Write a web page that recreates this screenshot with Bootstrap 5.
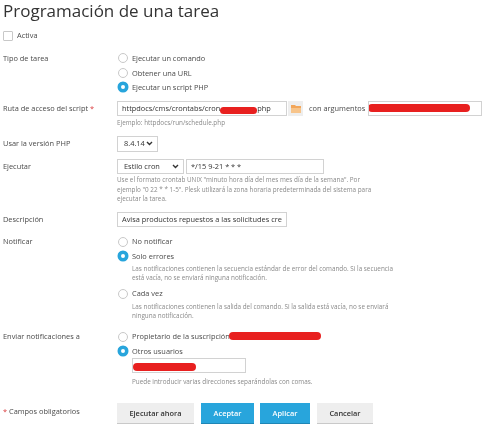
<!DOCTYPE html>
<html lang="es">
<head>
<meta charset="utf-8">
<title>Programación de una tarea</title>
<link href="https://cdn.jsdelivr.net/npm/bootstrap@5.3.0/dist/css/bootstrap.min.css" rel="stylesheet">
<style>
html,body{height:440px;overflow:hidden}
body{font-family:"Open Sans","Noto Sans",sans-serif;font-size:7.4px;line-height:15px;color:#4a4a4a;background:#fff;padding:0 0 0 3px;filter:blur(.25px)}
.ttl{font-size:17px;line-height:22px;font-weight:400;color:#333;margin:0}
.frow{display:flex}
.lbl{width:114px;flex:none;line-height:14.5px}
.ctl{flex:1;min-width:0}
.opt{display:flex;align-items:center;gap:4px;height:14.5px;line-height:14.5px;position:relative}
.rad{width:10px;height:10px;border-radius:50%;border:1px solid #c8c8c8;background:#fff;flex:none;margin-left:1px}
.rad.on{border:3px solid #28a5dc;box-shadow:0 0 0 .5px #28a5dc}
.chk{width:10px;height:10px;border:1px solid #c8c8c8;border-radius:1px;flex:none}
.fld{height:15px;border:1px solid #d2d2d2;background:#fff;padding:0 4px;display:flex;align-items:center;color:#333;white-space:nowrap;overflow:hidden;position:relative;flex:none}
.gapfill{width:35px;flex:none}
.hnt{font-size:6.35px;line-height:9.5px;color:#8a8a8a;white-space:nowrap}
.hnt.in{margin-left:15px}
.sel{justify-content:space-between;padding:0 4px 0 6px}
.chev{width:7px;height:5px;flex:none}
.scr{position:absolute;background:#e8201f;border-radius:4px}
.fold{width:15px;height:15px;background:#eee;display:flex;align-items:center;justify-content:center;flex:none;margin:0 6px 0 1px}
.act{border:0;border-bottom:1px solid #c9c9c9;height:21px;font-size:7.4px;line-height:20px;font-weight:600;font-family:inherit;padding:0;border-radius:0;background:#eeeeee;color:#333}
.act.pri{background:#28a5dc;color:#fff;border-bottom-color:#1f86b5}
.req{color:#d9383a}
</style>
</head>
<body>
<h1 class="ttl">Programación de una tarea</h1>
<div class="d-flex align-items-center" style="gap:4px;margin-top:8px;height:11px"><span class="chk"></span><span>Activa</span></div>

<div class="frow" style="margin-top:10px">
  <div class="lbl">Tipo de tarea</div>
  <div class="ctl">
    <div class="opt"><span class="rad"></span>Ejecutar un comando</div>
    <div class="opt"><span class="rad"></span>Obtener una URL</div>
    <div class="opt"><span class="rad on"></span>Ejecutar un script PHP</div>
  </div>
</div>

<div class="frow" style="margin-top:6.5px">
  <div class="lbl">Ruta de acceso del script <span class="req">*</span></div>
  <div class="ctl">
    <div class="d-flex align-items-center">
      <div class="fld" style="width:170px">httpdocs/cms/crontabs/cron<span class="gapfill"></span>.php<span class="scr" style="left:102px;top:5px;width:37px;height:7px"></span></div>
      <div class="fold"><svg width="10" height="9" viewBox="0 0 10 9"><path d="M0 1h4l1 1h5v7H0z" fill="#f2a65a"/><path d="M0 4h10v5H0z" fill="#f7c48a"/></svg></div>
      <span style="white-space:nowrap;margin-right:3px">con argumentos</span>
      <div class="fld" style="width:114px"><span class="scr" style="left:-1px;top:2px;width:102px;height:8px"></span></div>
    </div>
    <div class="hnt" style="margin-top:2px">Ejemplo: httpdocs/run/schedule.php</div>
  </div>
</div>

<div class="frow" style="margin-top:8px">
  <div class="lbl">Usar la versión PHP</div>
  <div class="ctl">
    <div class="fld sel" style="width:41px;height:16px">8.4.14<svg class="chev" viewBox="0 0 7 5"><path d="M1 1l2.5 2.5L6 1" fill="none" stroke="#333" stroke-width="1.4"/></svg></div>
  </div>
</div>

<div class="frow" style="margin-top:7px">
  <div class="lbl">Ejecutar</div>
  <div class="ctl">
    <div class="d-flex" style="gap:2px">
      <div class="fld sel" style="width:67px">Estilo cron<svg class="chev" viewBox="0 0 7 5"><path d="M1 1l2.5 2.5L6 1" fill="none" stroke="#333" stroke-width="1.4"/></svg></div>
      <div class="fld" style="width:138px">*/15 9-21 * * *</div>
    </div>
    <div class="hnt" style="margin-top:1.5px">Use el formato crontab UNIX "minuto hora día del mes mes día de la semana". Por<br>ejemplo "0 22 * * 1-5". Plesk utilizará la zona horaria predeterminada del sistema para<br>ejecutar la tarea.</div>
  </div>
</div>

<div class="frow" style="margin-top:8px">
  <div class="lbl">Descripción</div>
  <div class="ctl"><div class="fld" style="width:170px">Avisa productos repuestos a las solicitudes cre</div></div>
</div>

<div class="frow" style="margin-top:7.75px">
  <div class="lbl">Notificar</div>
  <div class="ctl">
    <div class="opt"><span class="rad"></span>No notificar</div>
    <div class="opt"><span class="rad on"></span>Solo errores</div>
    <div class="hnt in" style="margin-top:.5px">Las notificaciones contienen la secuencia estándar de error del comando. Si la secuencia<br>está vacía, no se enviará ninguna notificación.</div>
    <div class="opt" style="margin-top:3.5px"><span class="rad"></span>Cada vez</div>
    <div class="hnt in" style="margin-top:1px">Las notificaciones contienen la salida del comando. Si la salida está vacía, no se enviará<br>ninguna notificación.</div>
  </div>
</div>

<div class="frow" style="margin-top:8.5px">
  <div class="lbl">Enviar notificaciones a</div>
  <div class="ctl">
    <div class="opt"><span class="rad"></span>Propietario de la suscripción<span class="scr" style="left:112px;top:3px;width:92px;height:8px"></span></div>
    <div class="opt"><span class="rad on"></span>Otros usuarios</div>
    <div class="fld" style="width:114px;margin-left:15px"><span class="scr" style="left:0;top:4px;width:63px;height:8px"></span></div>
    <div class="hnt" style="margin:4px 0 0 15px">Puede introducir varias direcciones separándolas con comas.</div>
  </div>
</div>

<div class="frow" style="margin-top:16px">
  <div class="lbl" style="padding-top:1px"><span class="req">*</span> Campos obligatorios</div>
  <div class="ctl d-flex">
    <button class="btn act" style="width:77px;margin-right:7px">Ejecutar ahora</button>
    <button class="btn act pri" style="width:53px;margin-right:6px">Aceptar</button>
    <button class="btn act pri" style="width:50px;margin-right:7px">Aplicar</button>
    <button class="btn act" style="width:56px">Cancelar</button>
  </div>
</div>
</body>
</html>
